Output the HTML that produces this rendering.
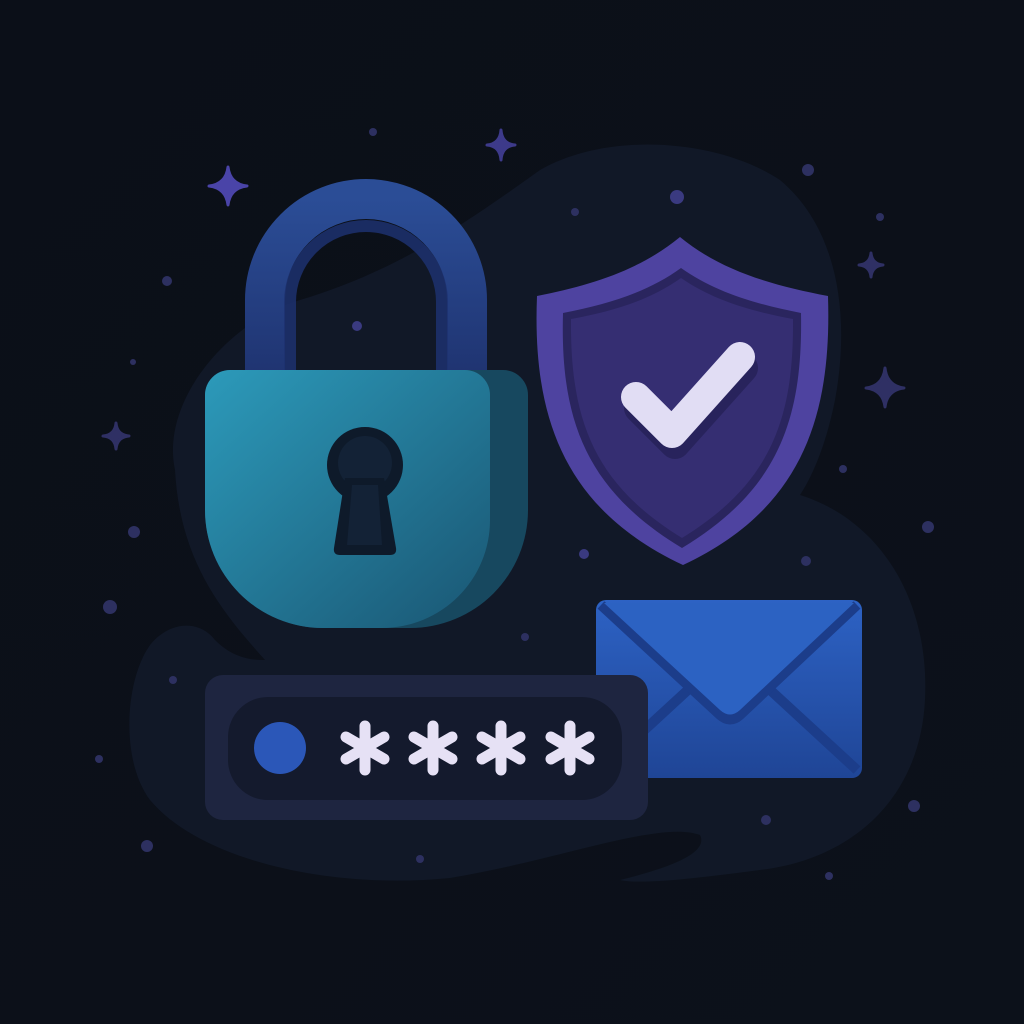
<!DOCTYPE html>
<html><head><meta charset="utf-8"><style>html,body{margin:0;padding:0;background:#0b1019;}svg{display:block}</style></head>
<body>
<svg width="1024" height="1024" viewBox="0 0 1024 1024" xmlns="http://www.w3.org/2000/svg">
<defs>
<linearGradient id="bg" x1="0" y1="0" x2="1" y2="1"><stop offset="0" stop-color="#0b0f18"/><stop offset="1" stop-color="#0c111a"/></linearGradient>
<linearGradient id="lock" x1="0" y1="0" x2="1" y2="1"><stop offset="0" stop-color="#2c9aba"/><stop offset="1" stop-color="#1a5673"/></linearGradient>
<linearGradient id="shk" x1="0" y1="0" x2="0" y2="1"><stop offset="0" stop-color="#2b4d96"/><stop offset="1" stop-color="#1f3370"/></linearGradient>
<linearGradient id="env" x1="0" y1="0" x2="0" y2="1"><stop offset="0" stop-color="#2d62c4"/><stop offset="1" stop-color="#1f4596"/></linearGradient>
</defs>
<rect width="1024" height="1024" fill="url(#bg)"/>
<path d="M175 470 C160 400 230 320 300 300 C400 270 470 220 540 170 C610 130 720 140 780 180 C840 230 850 320 835 400 C825 450 810 480 800 495 C880 520 930 600 925 700 C920 800 850 860 760 870 C700 878 640 885 620 880 C660 870 710 855 700 835 C660 820 560 860 450 878 C330 890 200 860 150 800 C120 760 125 680 150 645 C170 620 200 620 215 640 C235 660 255 660 265 660 C220 610 180 560 175 470 Z" fill="#111827"/>
<!-- shackle -->
<path d="M265 380 V300 A101 101 0 0 1 467 300 V380" fill="none" stroke="url(#shk)" stroke-width="40"/>
<path d="M290 380 V302 A76 76 0 0 1 442 302 V380" fill="none" stroke="#1d3170" stroke-width="12" opacity=".85"/>
<!-- lock body -->
<path d="M230 370 H503 A25 25 0 0 1 528 395 V510 A118 118 0 0 1 410 628 H323 A118 118 0 0 1 205 510 V395 A25 25 0 0 1 230 370 Z" fill="#17485f"/>
<path d="M230 370 H465 A25 25 0 0 1 490 395 V520 A108 108 0 0 1 382 628 H323 A118 118 0 0 1 205 510 V395 A25 25 0 0 1 230 370 Z" fill="url(#lock)"/>
<circle cx="365" cy="465" r="38" fill="#0e1a2a"/>
<circle cx="365" cy="463" r="27" fill="#132236"/>
<path d="M345 478 L384 478 L396 548 Q397 555 390 555 L340 555 Q333 555 334 548 Z" fill="#0e1a2a"/>
<path d="M352 485 L378 485 L382 545 L347 545 Z" fill="#132236"/>
<!-- shield -->
<path d="M680 237 C720 270 770 285 828 296 C832 420 800 510 683 565 C566 510 532 420 537 296 C592 285 640 270 680 237 Z" fill="#4e43a0"/>
<path d="M681 268 C715 292 755 304 801 313 C803 420 778 490 682 548 C586 490 560 420 563 313 C609 304 648 292 681 268 Z" fill="#2a255e"/>
<path d="M681 278 C713 300 750 311 793 319 C794 420 770 484 682 538 C594 484 570 420 571 319 C614 311 650 300 681 278 Z" fill="#352e72"/>
<path d="M636 402 L672 438 L740 362" fill="none" stroke="#231f52" stroke-width="30" stroke-linecap="round" stroke-linejoin="round" transform="translate(3,6)" opacity=".7"/>
<path d="M636 397 L672 433 L740 357" fill="none" stroke="#e1ddf4" stroke-width="30" stroke-linecap="round" stroke-linejoin="round"/>
<!-- envelope -->
<rect x="596" y="600" width="266" height="178" rx="10" fill="url(#env)"/>
<path d="M601 770 L690 688 M857 770 L768 688" stroke="#1c3d8a" stroke-width="10"/>
<path d="M601 605 L720 715 Q730 724 740 715 L857 605" fill="none" stroke="#1c3d8a" stroke-width="10"/>
<path d="M604 603 H854 L740 710 Q730 719 720 710 Z" fill="#2c62c2"/>
<!-- password field -->
<rect x="205" y="675" width="443" height="145" rx="18" fill="#1e2540"/>
<rect x="228" y="697" width="394" height="103" rx="40" fill="#141a2d"/>
<circle cx="280" cy="748" r="26" fill="#2b57b8"/>
<g stroke="#e6e1f5" stroke-width="11" stroke-linecap="round">
<path d="M365 726 V770 M346 737 L384 759 M346 759 L384 737"/>
<path d="M433 726 V770 M414 737 L452 759 M414 759 L452 737"/>
<path d="M501 726 V770 M482 737 L520 759 M482 759 L520 737"/>
<path d="M570 726 V770 M551 737 L589 759 M551 759 L589 737"/>
</g>
<!-- sparkles -->
<g fill="#4a44a8" stroke-linejoin="round">
<path d="M228 167 Q230 184 247 186 Q230 188 228 205 Q226 188 209 186 Q226 184 228 167 Z" stroke="#4a44a8" stroke-width="3"/>
<path d="M501 130 Q502 144 515 145 Q502 146 501 160 Q500 146 487 145 Q500 144 501 130 Z" fill="#3d3a8a" stroke="#3d3a8a" stroke-width="3"/>
<path d="M871 253 Q872 264 883 265 Q872 266 871 277 Q870 266 859 265 Q870 264 871 253 Z" fill="#2f3064" stroke="#2f3064" stroke-width="3"/>
<path d="M885 368 Q887 386 904 388 Q887 390 885 407 Q883 390 866 388 Q883 386 885 368 Z" fill="#2f3064" stroke="#2f3064" stroke-width="3"/>
<path d="M116 423 Q117 435 129 436 Q117 437 116 449 Q115 437 103 436 Q115 435 116 423 Z" fill="#2f3064" stroke="#2f3064" stroke-width="3"/>
</g>
<g fill="#2d3060">
<circle cx="373" cy="132" r="4"/><circle cx="677" cy="197" r="7" fill="#3a3a80"/><circle cx="575" cy="212" r="4"/><circle cx="808" cy="170" r="6"/><circle cx="880" cy="217" r="4"/>
<circle cx="167" cy="281" r="5"/><circle cx="357" cy="326" r="5" fill="#3a3a80"/><circle cx="133" cy="362" r="3"/><circle cx="134" cy="532" r="6"/>
<circle cx="584" cy="554" r="5" fill="#3a3a80"/><circle cx="806" cy="561" r="5"/><circle cx="843" cy="469" r="4"/><circle cx="928" cy="527" r="6"/>
<circle cx="110" cy="607" r="7"/><circle cx="525" cy="637" r="4"/><circle cx="173" cy="680" r="4"/><circle cx="99" cy="759" r="4"/>
<circle cx="147" cy="846" r="6"/><circle cx="420" cy="859" r="4"/><circle cx="766" cy="820" r="5"/><circle cx="914" cy="806" r="6"/><circle cx="829" cy="876" r="4"/>
</g>
</svg>
</body></html>
